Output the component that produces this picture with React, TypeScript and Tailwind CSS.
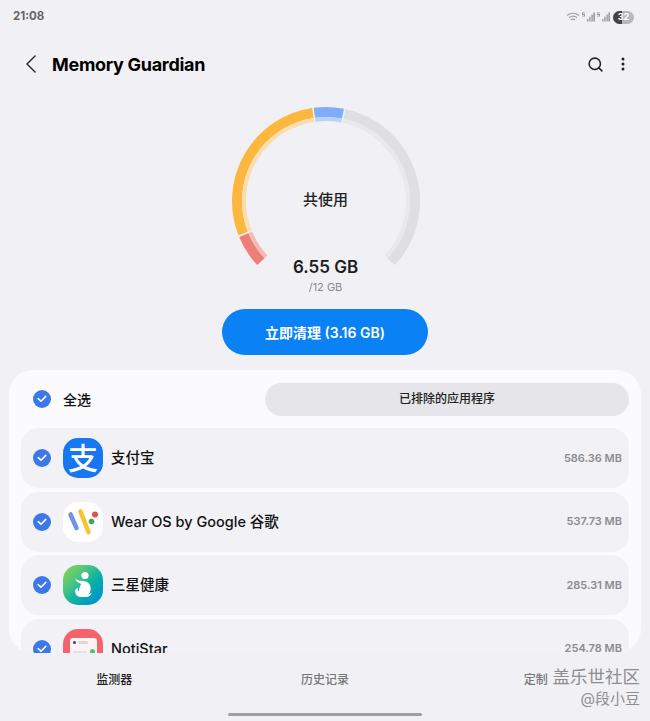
import React from 'react';
import { Search } from 'lucide-react';

const CX = 100;
const CY = 100;

function arc(r: number, from: number, to: number) {
  const pt = (deg: number) => {
    const a = (deg * Math.PI) / 180;
    return `${(CX + r * Math.sin(a)).toFixed(2)} ${(CY - r * Math.cos(a)).toFixed(2)}`;
  };
  return `M${pt(from)} A${r} ${r} 0 ${to - from > 180 ? 1 : 0} 1 ${pt(to)}`;
}

const segments = [
  { from: -133, to: -112.5, main: '#ee7f78', light: '#f6b8b3' },
  { from: -111.5, to: -8.5, main: '#fdb73e', light: '#f9dfae' },
  { from: -7.5, to: 11, main: '#7fadf8', light: '#b9d0f7' },
  { from: 12, to: 133, main: '#dfdfe1', light: '#e9e9ec' },
];

function Gauge() {
  return (
    <svg width="200" height="200" viewBox="0 0 200 200" className="col-start-1 row-start-1">
      {segments.map((s) => (
        <g key={s.from} fill="none">
          <path d={arc(89, s.from, s.to)} stroke={s.main} strokeWidth="10" />
          <path d={arc(82, s.from, s.to)} stroke={s.light} strokeWidth="4" />
        </g>
      ))}
    </svg>
  );
}

function Check() {
  return (
    <span className="flex h-[18px] w-[18px] shrink-0 items-center justify-center rounded-full bg-[#3b78e8]">
      <svg width="10" height="8" viewBox="0 0 10 8" fill="none">
        <path d="M1.2 3.6 4 6.2 8.8 1.4" stroke="#fff" strokeWidth="1.6" strokeLinecap="round" strokeLinejoin="round" />
      </svg>
    </span>
  );
}

function AlipayIcon() {
  return (
    <div className="flex h-10 w-10 items-center justify-center rounded-[15px] bg-[#1677f0] text-[30px] font-medium leading-none text-white">
      支
    </div>
  );
}

function WearIcon() {
  return (
    <div className="h-10 w-10 overflow-hidden rounded-[15px] bg-white">
      <svg width="40" height="40" viewBox="0 0 40 40" fill="none">
        <path d="M7.5 12.5 13.5 26" stroke="#6f94e8" strokeWidth="4.6" strokeLinecap="round" />
        <path d="M17.5 9.5 25.5 30" stroke="#f7c52e" strokeWidth="4.6" strokeLinecap="round" />
        <circle cx="32" cy="12.5" r="3" fill="#e0534a" />
        <circle cx="28.5" cy="19.5" r="2.8" fill="#3fa85a" />
      </svg>
    </div>
  );
}

function HealthIcon() {
  return (
    <div className="h-10 w-10 overflow-hidden rounded-[15px] bg-gradient-to-br from-[#8ada2c] via-[#19b89a] to-[#0d86d8]">
      <svg width="40" height="40" viewBox="0 0 40 40" fill="#fff">
        <circle cx="22" cy="10.5" r="3.6" />
        <path d="M12 13.5c2.5 1.8 5 2.4 8 2.6 4 .3 7 2.4 7.6 6.2.4 2.6-.3 5-2 7 1-.2 2.2-.8 3.2-1.8-.6 2.6-2.8 4.4-5.6 4.6h-6c-3-.4-5-2.6-5-5.4 0-1.8 1-3.2 2.4-4.2-.2 1.6.2 3 1.2 4.2.2-2.6 1-5.6 2.4-7.8-3-.8-5-2.6-6.2-5.4Z" />
      </svg>
    </div>
  );
}

function NotiIcon() {
  return (
    <div className="flex h-10 w-10 items-start justify-center rounded-[15px] bg-[#f4636d] pt-[9px]">
      <div className="relative h-[18px] w-[27px] rounded-[3px] bg-[#fdf3f3]">
        <span className="absolute left-[3px] top-[3px] h-[3px] w-[3px] rounded-full bg-[#33457a]" />
        <span className="absolute left-[8px] top-[3px] h-[3px] w-[10px] rounded-sm bg-[#d9d9de]" />
        <span className="absolute bottom-[3px] left-[3px] h-[2px] w-[14px] rounded-sm bg-[#e4e4e8]" />
        <span className="absolute bottom-[2px] right-[2px] h-[5px] w-[5px] rounded-full bg-[#4cc46d]" />
      </div>
    </div>
  );
}

const apps = [
  { name: '支付宝', size: '586.36 MB', icon: <AlipayIcon /> },
  { name: 'Wear OS by Google 谷歌', size: '537.73 MB', icon: <WearIcon /> },
  { name: '三星健康', size: '285.31 MB', icon: <HealthIcon /> },
  { name: 'NotiStar', size: '254.78 MB', icon: <NotiIcon /> },
];

function Signal() {
  return (
    <svg width="13" height="10" viewBox="0 0 13 10" fill="#9a9a9e">
      <path d="M5 9.5h1.4V7H5zM7.2 9.5h1.4V4.8H7.2zM9.4 9.5h1.4V2.5H9.4zM11.4 9.5H13V.5h-1.6z" />
      <path d="M0 .5h3v.8H1v.8h2v2.4H0v-.8h2v-.8H0z" />
    </svg>
  );
}

export default function App() {
  return (
    <div className="relative flex h-[721px] w-[650px] flex-col overflow-hidden bg-[#f1f1f5] font-['Inter','Noto_Sans_CJK_SC',sans-serif] text-[#111]">
      <div className="flex h-[34px] shrink-0 items-center justify-between pl-[13px] pr-[16px]">
        <span className="text-[11.5px] font-bold text-[#666]">21:08</span>
        <div className="flex items-center gap-[2px]">
          <svg width="14" height="11" viewBox="0 0 14 11" fill="none" stroke="#a0a0a4" strokeWidth="1.2">
            <path d="M1 3.5c3.5-3 8.5-3 12 0M3 5.8c2.5-2 5.500-2 8 0M5 8c1.300-1 2.700-1 4 0" />
          </svg>
          <Signal />
          <Signal />
          <div className="relative ml-[1px] flex h-[13px] w-[21px] items-center justify-center overflow-hidden rounded-full bg-[#b8b8bb] text-[9px] font-bold text-white">
            <span className="absolute bottom-0 left-0 top-0 w-[9px] bg-[#444]" />
            <span className="relative">32</span>
          </div>
        </div>
      </div>

      <div className="flex h-[60px] shrink-0 items-center pl-[26px] pr-[25px]">
        <svg width="10" height="18" viewBox="0 0 10 18" fill="none" stroke="#222" strokeWidth="1.4" strokeLinecap="round" strokeLinejoin="round">
          <path d="M9 1 1 9l8 8" />
        </svg>
        <h1 className="ml-[16px] text-[18px] font-bold tracking-[-0.3px] text-black">Memory Guardian</h1>
        <Search className="ml-auto h-[17px] w-[17px] text-[#222]" strokeWidth={2.2} />
        <svg width="4" height="14" viewBox="0 0 4 14" fill="#222" className="ml-[17px]">
          <circle cx="2" cy="2" r="1.5" />
          <circle cx="2" cy="7" r="1.5" />
          <circle cx="2" cy="12" r="1.5" />
        </svg>
      </div>

      <div className="mt-[7px] grid h-[200px] shrink-0 justify-items-center pl-[1px]">
        <Gauge />
        <div className="col-start-1 row-start-1 flex flex-col items-center">
          <span className="mt-[88px] text-[15px] font-medium leading-[22px] text-[#222]">共使用</span>
          <span className="mt-[44px] text-[17px] font-semibold leading-[24px] text-[#1c1c1e]">6.55 GB</span>
          <span className="mt-[1px] text-[11px] leading-[14px] text-[#8a8a8e]">/12 GB</span>
        </div>
      </div>

      <div className="mt-[8px] flex shrink-0 justify-center">
        <button className="h-[46px] w-[206px] rounded-full bg-[#0a81f5] text-[14px] font-semibold text-white">
          立即清理 (3.16 GB)
        </button>
      </div>

      <div className="mx-[9px] mt-[15px] h-[283px] shrink-0 overflow-hidden rounded-[24px] bg-[#fbfbfe] px-[12px]">
        <div className="flex h-[58px] items-center pl-[12px]">
          <Check />
          <span className="ml-[12px] text-[14px] font-medium">全选</span>
          <button className="ml-auto h-[33px] w-[364px] rounded-full bg-[#e6e6ea] text-[12px] font-medium text-[#222]">
            已排除的应用程序
          </button>
        </div>
        <div className="flex flex-col gap-[3.5px]">
          {apps.map((app) => (
            <div key={app.name} className="flex h-[60px] shrink-0 items-center rounded-[18px] bg-[#f1f1f6] pl-[12px] pr-[7px]">
              <Check />
              <div className="ml-[12px]">{app.icon}</div>
              <span className="ml-[8px] text-[14.5px] font-medium text-[#111]">{app.name}</span>
              <span className="ml-auto text-[11px] font-semibold text-[#8c8c90]">{app.size}</span>
            </div>
          ))}
        </div>
      </div>

      <div className="mt-[13px] grid shrink-0 grid-cols-3 px-[9px] text-[12px] font-medium leading-[28px]">
        <span className="text-center text-[#222]">监测器</span>
        <span className="text-center text-[#777]">历史记录</span>
        <span className="text-center text-[#777]">定制</span>
      </div>

      <div className="absolute right-[10px] top-[665px] flex flex-col items-end text-[#8e8e92]">
        <span className="text-[17.500px] leading-[23px]">盖乐世社区</span>
        <span className="text-[15px] leading-[22px]">@段小豆</span>
      </div>

      <div className="absolute bottom-[5px] left-[228px] h-[3px] w-[194px] rounded-full bg-[#a0a0a4]" />
    </div>
  );
}
